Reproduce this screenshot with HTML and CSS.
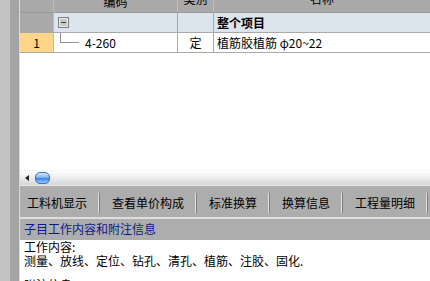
FILE: index.html
```html
<!DOCTYPE html>
<html lang="zh-CN">
<head>
  <meta charset="UTF-8" />
  <title>定额子目</title>
  <link rel="stylesheet" href="styles.css">
</head>
<body>
  <div class="app">
    <div class="side"></div>
    <div class="main">
      <div class="grid">
        <div class="row head">
          <div class="cell num"></div>
          <div class="cell code">编码</div>
          <div class="cell kind">类别</div>
          <div class="cell name">名称</div>
        </div>
        <div class="row group">
          <div class="cell num"></div>
          <div class="cell code"><span class="toggle">−</span></div>
          <div class="cell kind"></div>
          <div class="cell name"><b>整个项目</b></div>
        </div>
        <div class="row item">
          <div class="cell num">1</div>
          <div class="cell code"><span class="branch"></span>4-260</div>
          <div class="cell kind">定</div>
          <div class="cell name">植筋胶植筋 φ20~22</div>
        </div>
      </div>

      <div class="hscroll">
        <span class="arrow"></span>
        <span class="thumb"></span>
      </div>

      <div class="tabs">
        <span class="tab">工料机显示</span>
        <span class="tab">查看单价构成</span>
        <span class="tab">标准换算</span>
        <span class="tab">换算信息</span>
        <span class="tab">工程量明细</span>
        <span class="tab active">说明信息</span>
      </div>

      <div class="panel">
        <div class="panel-title">子目工作内容和附注信息</div>
        <div class="panel-body">
          <p>工作内容:</p>
          <p>测量、放线、定位、钻孔、清孔、植筋、注胶、固化.</p>
          <p class="gap">附注信息:</p>
        </div>
      </div>
    </div>
  </div>
</body>
</html>
```

FILE: styles.css
```css
body {
  margin: 0;
  background: #adadad;
  font-family: "Noto Sans CJK SC", "DejaVu Sans", sans-serif;
  font-size: 12px;
  color: #000;
  overflow: hidden;
}
.app {
  display: flex;
  height: 281px;
}
.side {
  width: 19px;
  flex: none;
  background: linear-gradient(to right, #c2c2c2 10px, #a4a4a4 10px);
  border-right: 1px solid #d8d8d8;
}
.main {
  flex: 1;
  display: flex;
  flex-direction: column;
  overflow: hidden;
}
.grid {
  height: 170px;
  flex: none;
  background: #fff;
  overflow: hidden;
}
.row {
  display: flex;
  height: 19px;
  border-bottom: 1px solid #a9a9a9;
}
.cell {
  line-height: 19px;
  white-space: nowrap;
  overflow: hidden;
  border-right: 1px solid #a9a9a9;
}
.num {
  width: 33px;
  flex: none;
  text-align: center;
  background: #a9a9a9;
  border-right-color: #bdbdbd;
}
.code {
  width: 124px;
  flex: none;
  display: flex;
  align-items: center;
  padding-left: 3px;
  box-sizing: border-box;
}
.kind {
  width: 35px;
  flex: none;
  text-align: center;
}
.name {
  flex: 1;
  padding-left: 3px;
  border-right: none;
}
.head {
  height: 20px;
  margin-top: -8px;
  background: #a9a9a9;
  border-bottom-color: #9a9a9a;
}
.head .cell {
  line-height: 14px;
  justify-content: center;
  text-align: center;
  border-right-color: #bdbdbd;
  padding: 0;
}
.group {
  background: #dce4ee;
}
.item .num {
  background: #ffd58c;
}
.toggle {
  display: inline-block;
  width: 9px;
  height: 9px;
  border: 1px solid #808080;
  box-shadow: inset 0 0 0 1px #e8e8e8;
  background: #c8c8c8;
  line-height: 8px;
  font-size: 10px;
  text-align: center;
  margin-left: 1px;
}
.branch {
  width: 18px;
  height: 10px;
  margin: -10px 6px 0 3px;
  border-left: 1px solid #909090;
  border-bottom: 1px solid #909090;
}
.hscroll {
  height: 14px;
  flex: none;
  border-top: 1px solid #f4f4f4;
  border-bottom: 1px solid #e8e8e8;
  background: linear-gradient(#ffffff, #f0f0f0 40%, #d6d6d6);
  display: flex;
  align-items: center;
  padding-left: 5px;
}
.arrow {
  width: 0;
  height: 0;
  border-top: 3px solid transparent;
  border-bottom: 3px solid transparent;
  border-right: 4px solid #222;
  margin-right: 6px;
}
.thumb {
  width: 15px;
  height: 12px;
  border-radius: 5px;
  border: 1px solid #3a6fc4;
  background: linear-gradient(#dbe9ff, #7fb0f0 45%, #3d84e6 55%, #9cc6ff);
  box-sizing: border-box;
}
.tabs {
  height: 31px;
  flex: none;
  display: flex;
  align-items: center;
  padding: 3px 0 0 7px;
  box-sizing: border-box;
  white-space: nowrap;
}
.tab {
  padding: 0 11px;
  border-right: 1px solid #e2e2e2;
  box-shadow: 1px 0 0 #7c7c7c;
  line-height: 20px;
  margin-right: 2px;
}
.tab:first-child {
  padding-left: 0;
}
.tab.active {
  background: repeating-conic-gradient(#d0d0d0 0 25%, #f0f0f0 0 50%) 0 0 / 2px 2px;
  border: 1px solid #808080;
  padding: 0 4px;
  margin-left: 3px;
}
.panel {
  flex: 1;
  min-height: 0;
  overflow: hidden;
  border-top: 2px solid #dedede;
  display: flex;
  flex-direction: column;
}
.panel-title {
  height: 21px;
  flex: none;
  line-height: 20px;
  padding-left: 4px;
  color: #0a1a8c;
}
.panel-body {
  flex: 1;
  background: #fff;
  padding: 0 4px;
  line-height: 14px;
}
.panel-body p {
  margin: 0;
}
.panel-body .gap {
  margin-top: 10px;
}
```
